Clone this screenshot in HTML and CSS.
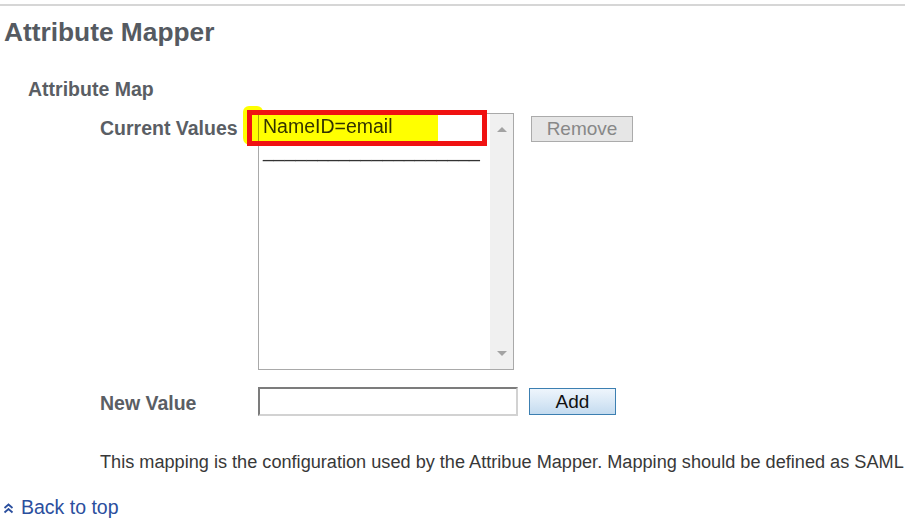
FILE: index.html
```html
<!DOCTYPE html>
<html>
<head>
<meta charset="utf-8">
<link rel="stylesheet" href="styles.css">
</head>
<body>
<div class="topline"></div>
<h1 class="title">Attribute Mapper</h1>
<h2 class="subtitle">Attribute Map</h2>
<div class="form">
  <div class="row row-current">
    <div class="label label-current">Current Values</div>
    <div class="listwrap">
      <div class="listbox">
        <div class="items">
          <div class="item">NameID=email</div>
          <div class="item">____________________</div>
        </div>
        <div class="scrollbar">
          <span class="arrow arrow-up"></span>
          <span class="arrow arrow-down"></span>
        </div>
      </div>
      <div class="highlight"></div>
      <div class="redbox"></div>
    </div>
    <button class="btn btn-remove" disabled>Remove</button>
  </div>
  <div class="row row-new">
    <div class="label label-new">New Value</div>
    <div class="textinput"></div>
    <button class="btn btn-add">Add</button>
  </div>
  <p class="desc">This mapping is the configuration used by the Attribue Mapper. Mapping should be defined as SAML</p>
</div>
<a class="backtop" href="#">
  <svg class="chev" width="11" height="12" viewBox="0 0 11 12"><polyline points="1.5,6 5.5,2.5 9.5,6" fill="none" stroke="#2b4f9e" stroke-width="1.8"/><polyline points="1.5,10.5 5.5,7 9.5,10.5" fill="none" stroke="#2b4f9e" stroke-width="1.8"/></svg>
  <span>Back to top</span>
</a>
</body>
</html>
```
FILE: styles.css
```css
html, body {
  margin: 0;
  padding: 0;
  background: #ffffff;
  overflow: hidden;
}
body {
  font-family: "Liberation Sans", Arial, sans-serif;
  width: 905px;
  height: 529px;
}
.topline {
  margin-top: 4px;
  height: 2px;
  background: #d6d6d6;
}
.title {
  margin: 11px 0 0 4px;
  font-size: 26.3px;
  line-height: 30px;
  font-weight: bold;
  color: #555a61;
}
.subtitle {
  margin: 30px 0 0 28px;
  font-size: 19.5px;
  line-height: 24px;
  font-weight: bold;
  color: #5a5e64;
}
.form {
  padding-left: 100px;
  margin-top: 12px;
}
.row {
  display: flex;
  align-items: flex-start;
}
.label {
  width: 158px;
  font-size: 19.5px;
  line-height: 24px;
  font-weight: bold;
  color: #5a5e64;
  white-space: nowrap;
}
.label-current { margin-top: 3px; }
.label-new { margin-top: 4px; }
.listwrap {
  position: relative;
  z-index: 0;
}
.listbox {
  width: 254px;
  height: 255px;
  border: 1px solid #a9a9a9;
  background: #fff;
  display: flex;
}
.items {
  flex: 1;
  padding-left: 4px;
  overflow: hidden;
}
.item {
  font-size: 19.5px;
  line-height: 24px;
  color: #333333;
  white-space: nowrap;
}
.scrollbar {
  width: 23px;
  background: #f0f0f0;
  display: flex;
  flex-direction: column;
  justify-content: space-between;
  align-items: center;
  padding: 13px 0 13px;
}
.arrow {
  width: 0;
  height: 0;
  border-left: 5px solid transparent;
  border-right: 5px solid transparent;
}
.arrow-up { border-bottom: 5px solid #a3a3a3; }
.arrow-down { border-top: 5px solid #a3a3a3; }
.highlight {
  position: absolute;
  left: -15px;
  top: -3px;
  width: 195px;
  height: 35px;
  background: #ffff00;
  border-radius: 4px 2px 2px 7px;
  mix-blend-mode: multiply;
  z-index: 2;
}
.highlight::before {
  content: "";
  position: absolute;
  left: 0;
  top: -4px;
  width: 20px;
  height: 8px;
  background: #ffff00;
  border-radius: 6px 6px 0 0;
}
.redbox {
  position: absolute;
  left: -11px;
  top: -3px;
  width: 230px;
  height: 26px;
  border: 5px solid #f01212;
  z-index: 3;
}
.btn {
  font-family: "Liberation Sans", Arial, sans-serif;
  font-size: 19px;
  line-height: 22px;
  padding: 0;
  box-sizing: border-box;
}
.btn-remove {
  margin-left: 17px;
  margin-top: 3px;
  width: 102px;
  height: 26px;
  background: #e6e6e6;
  border: 1px solid #ababab;
  color: #888888;
}
.row-new {
  margin-top: 17px;
}
.textinput {
  width: 256px;
  height: 25px;
  border: 2px solid;
  border-color: #7c7c7c #d2d2d2 #d2d2d2 #7c7c7c;
  background: #fff;
}
.btn-add {
  margin-left: 11px;
  margin-top: 1px;
  width: 87px;
  height: 27px;
  border: 1px solid #3c7fb1;
  background: linear-gradient(#eef5fc, #dceaf7 45%, #c4dbef);
  color: #111;
}
.desc {
  margin: 35px 0 0 0;
  font-size: 18.15px;
  line-height: 22px;
  color: #383838;
  white-space: nowrap;
}
.backtop {
  display: flex;
  align-items: center;
  margin: 22px 0 0 3px;
  text-decoration: none;
  color: #2b4f9e;
  font-size: 19.5px;
  line-height: 24px;
}
.chev {
  margin-right: 7px;
  margin-top: 1px;
}
```
